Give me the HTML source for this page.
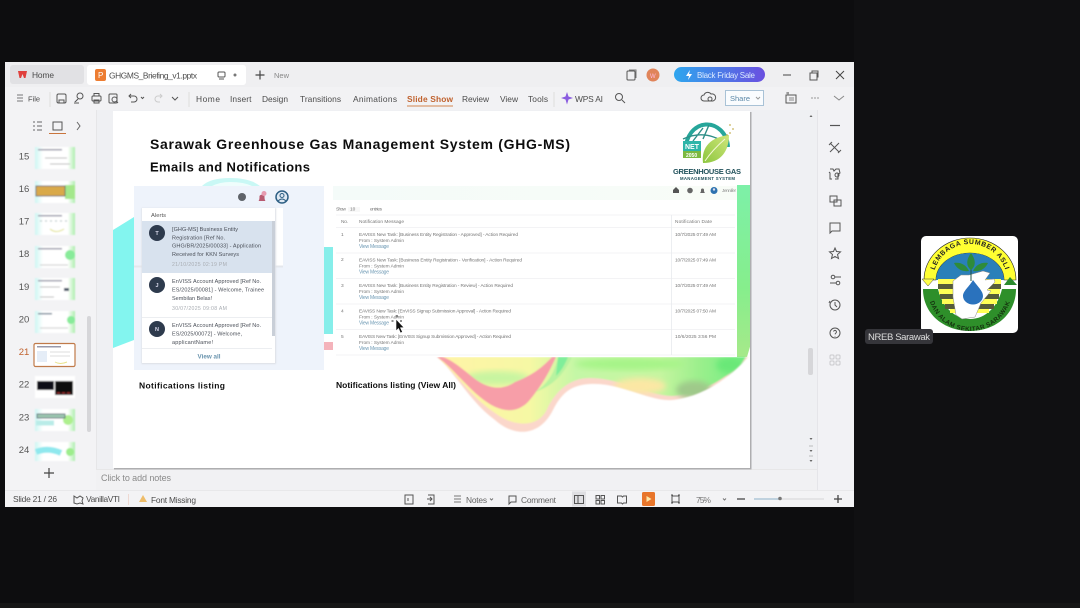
<!DOCTYPE html>
<html><head><meta charset="utf-8"><style>
html,body{margin:0;padding:0;background:#0d0d0f;width:1080px;height:608px;overflow:hidden}
svg{display:block}
text{font-family:"Liberation Sans",sans-serif}
.ui{font-size:8.400px;fill:#4c4c4c}
.ic{fill:none;stroke:#555;stroke-width:1}
.t{font-size:4.800px;fill:#777}
.a{font-size:5.500px;fill:#4a4f58}
.d{font-size:5.200px;fill:#a9adb3}
.n{font-size:9.500px;fill:#666}
.h{font-weight:bold;fill:#111}
</style></head><body>
<svg width="1080" height="608" viewBox="0 0 1080 608" xmlns="http://www.w3.org/2000/svg">
<defs>
<linearGradient id="pill" x1="0" x2="1" y1="0" y2="0"><stop offset="0" stop-color="#2ea6ee"/><stop offset="1" stop-color="#6a4fe0"/></linearGradient>
<linearGradient id="rg" x1="0" x2="0" y1="0" y2="1"><stop offset="0" stop-color="#7df0a8"/><stop offset=".6" stop-color="#86ee8c"/><stop offset="1" stop-color="#a6e98a"/></linearGradient>
<linearGradient id="wave" x1="0" x2="1" y1="0" y2="0"><stop offset="0" stop-color="#fff3a6"/><stop offset=".3" stop-color="#f6f8a4"/><stop offset=".45" stop-color="#c4f7a6"/><stop offset=".72" stop-color="#c6f5a0"/><stop offset=".85" stop-color="#9bef8c"/><stop offset="1" stop-color="#70ee82"/></linearGradient>
<linearGradient id="top" x1="0" x2="1" y1="0" y2="0"><stop offset="0" stop-color="#f4fbf9"/><stop offset="1" stop-color="#f8fcf7"/></linearGradient>
<linearGradient id="th" x1="0" x2="1" y1="0" y2="0"><stop offset="0" stop-color="#cdf6f3"/><stop offset=".2" stop-color="#fff"/><stop offset=".82" stop-color="#fff"/><stop offset="1" stop-color="#aeeeae"/></linearGradient>
<linearGradient id="leaf" x1="0" x2="1" y1="1" y2="0"><stop offset="0" stop-color="#8cc63f"/><stop offset="1" stop-color="#cfe67a"/></linearGradient>
<filter id="b" x="-5%" y="-5%" width="110%" height="110%"><feGaussianBlur stdDeviation="0.35"/></filter>
<filter id="b2" x="-5%" y="-5%" width="110%" height="110%"><feGaussianBlur stdDeviation="0.8"/></filter>
<filter id="b3" x="-20%" y="-20%" width="140%" height="140%"><feGaussianBlur stdDeviation="3"/></filter>
<clipPath id="slide"><rect x="113" y="111" width="637" height="357"/></clipPath>
<clipPath id="wclip"><path d="M437 357C455 372 470 402 495 420C515 438 540 436 553 410C562 392 572 385 590 384C620 382 650 402 672 400C702 397 730 378 748 357Z"/></clipPath>
<path id="arcTop" d="M933 281 A37 37 0 0 1 1007 281"/>
<path id="arcBot" d="M928 289 A42 42 0 0 0 1012 289"/>
</defs>

<rect width="1080" height="608" fill="#0d0d0f"/>
<rect x="854" y="0" width="226" height="608" fill="#101012"/>
<rect y="603" width="1080" height="5" fill="#161616"/>

<!-- window -->
<rect x="5" y="62" width="849" height="445" fill="#f2f2f4"/>
<rect x="5" y="62" width="849" height="25" fill="#efeff1"/>
<rect x="10" y="65" width="74" height="19" rx="3" fill="#e1e1e4"/>
<rect x="87" y="65" width="159" height="20" rx="3" fill="#fff"/>
<g filter="url(#b)">
<path d="M18 71h9l-1.500 7h-1.500l-1.500-4-1.500 4h-1.500z" fill="#e0403c"/>
<text x="32" y="78" class="ui" textLength="22" fill="#555">Home</text>
<rect x="95" y="69" width="11" height="12" rx="2" fill="#ed7d31"/>
<text x="98" y="78" font-size="8" fill="#fff">P</text>
<text x="109" y="78.500" class="ui" textLength="88">GHGMS_Briefing_v1.pptx</text>
<rect x="218" y="72" width="7" height="5" rx="1" class="ic"/><path d="M219 79h5" class="ic"/>
<circle cx="235" cy="75" r="1.500" fill="#777"/>
<path d="M260 70.500v9M255.500 75h9" stroke="#444" stroke-width="1.200"/>
<text x="274" y="78" font-size="7.500" fill="#888" textLength="15">New</text>
<rect x="627" y="71" width="8" height="9" rx="1" class="ic" stroke="#444"/><path d="M629 70h7v8" fill="none" stroke="#777"/>
<circle cx="653" cy="75" r="6.500" fill="#e0845a"/><text x="650" y="78" font-size="6" fill="#fbd">W</text>
<rect x="674" y="67" width="91" height="15" rx="7.500" fill="url(#pill)"/>
<path d="M690 70l-4 6h3l-1 4 4-6h-3z" fill="#fff"/>
<text x="697" y="78" font-size="8" fill="#dceaff" textLength="58">Black Friday Sale</text>
<path d="M783 75h8" stroke="#444" stroke-width="1"/>
<rect x="810" y="73" width="7" height="7" class="ic"/><path d="M812 73v-2h6v6h-1" class="ic"/>
<path d="M836 71l8 8M844 71l-8 8" stroke="#444" stroke-width="1"/>

<!-- toolbar -->
<path d="M17 95h6M17 98h6M17 101h6" stroke="#777"/>
<text x="28" y="101.500" class="ui" style="font-size:7.500px" textLength="12">File</text>
<path d="M50 92v15" stroke="#ddd"/>
<rect x="57" y="94" width="9" height="9" rx="1.500" class="ic"/><path d="M59 103v-3h5v3" class="ic"/>
<circle cx="80" cy="96" r="3" class="ic"/><path d="M78 99l-3 3v2M76 103h3" class="ic"/>
<rect x="92" y="96" width="9" height="5" rx="1" class="ic"/><rect x="94" y="93.500" width="5" height="2.500" class="ic"/><rect x="94" y="100" width="5" height="3" class="ic"/>
<rect x="109" y="94" width="8" height="9" rx="1" class="ic"/><circle cx="114.500" cy="99.500" r="2.500" class="ic"/><path d="M116 101l2 2" class="ic"/>
<path d="M129 96h5a3 3 0 0 1 0 6h-3M131 94l-2 2 2 2" class="ic"/><path d="M141 97l1.500 1.500L144 97" class="ic"/>
<path d="M162 96h-4a3 3 0 0 0 0 6h2M160 94l2 2-2 2" fill="none" stroke="#ccc"/>
<path d="M172 97l3 3 3-3" class="ic"/>
<path d="M189 92v15" stroke="#ddd"/>
<text x="196" y="102" class="ui" textLength="24">Home</text>
<text x="230" y="102" class="ui" textLength="21.500">Insert</text>
<text x="262" y="102" class="ui" textLength="26">Design</text>
<text x="300" y="102" class="ui" textLength="41">Transitions</text>
<text x="353" y="102" class="ui" textLength="44">Animations</text>
<text x="407" y="102" class="ui" font-weight="bold" style="fill:#c0622e" textLength="46">Slide Show</text>
<rect x="407" y="105.500" width="46" height="1" fill="#d2854f"/>
<text x="462" y="102" class="ui" textLength="27">Review</text>
<text x="500" y="102" class="ui" textLength="18">View</text>
<text x="528" y="102" class="ui" textLength="20">Tools</text>
<path d="M554 92v15" stroke="#ddd"/>
<path d="M567 92l1.500 4.500 4.500 1.500-4.500 1.500-1.500 5-1.500-5-4.500-1.500 4.500-1.500z" fill="#8a5ce0"/>
<text x="575" y="102" class="ui" textLength="28">WPS AI</text>
<circle cx="619" cy="97" r="3.500" class="ic"/><path d="M622 100l3 3" class="ic"/>
<path d="M704 101a3 3 0 0 1 0-6 4 4 0 0 1 7-1 3.500 3.500 0 0 1 2 7z" class="ic"/><circle cx="710" cy="99" r="2" fill="#f2f2f4" stroke="#555"/>
<rect x="725.500" y="90.500" width="38" height="15" fill="#fafcfe" stroke="#a9c2d6"/>
<text x="730" y="101" font-size="7.500" fill="#5b88a8" textLength="20">Share</text>
<path d="M756 97l2 2 2-2" fill="none" stroke="#999"/>
<rect x="786" y="95" width="10" height="8" class="ic"/><path d="M786 93h3M788 92v3M789 98h5M789 100h5" stroke="#666" stroke-width=".8"/>
<circle cx="812" cy="98" r=".6" fill="#555"/><circle cx="815" cy="98" r=".6" fill="#555"/><circle cx="818" cy="98" r=".6" fill="#555"/>
<path d="M834 96l5 4 5-4" fill="none" stroke="#888"/>
</g>

<!-- panels -->
<rect x="5" y="110" width="91" height="380" fill="#f3f3f5"/>
<rect x="96" y="110" width="722" height="359" fill="#eff0f3"/>
<rect x="96" y="110" width=".8" height="380" fill="#e3e3e6"/>
<rect x="817" y="110" width="37" height="380" fill="#f2f2f5"/>
<rect x="817" y="110" width=".8" height="380" fill="#e2e2e6"/>
<rect x="96" y="469" width="721" height="21" fill="#f1f1f3"/>
<rect x="96" y="469" width="721" height=".8" fill="#e4e4e6"/>
<rect x="5" y="490" width="849" height="17" fill="#f3f3f5"/>
<rect x="5" y="490" width="849" height=".8" fill="#e6e6e8"/>

<!-- left pane -->
<g filter="url(#b)">
<path d="M33 122h2M33 126h2M33 130h2M37 122h5M37 126h5M37 130h5" stroke="#666" stroke-width="1"/>
<rect x="53" y="122" width="9" height="8" fill="none" stroke="#555"/>
<rect x="49" y="133" width="17" height="1" fill="#c9743c"/>
<path d="M77 122l3 4-3 4" fill="none" stroke="#666"/>
<g font-size="9.500" fill="#555" text-anchor="middle">
<text x="24" y="159.500">15</text><text x="24" y="192">16</text><text x="24" y="224.500">17</text><text x="24" y="257">18</text><text x="24" y="290">19</text><text x="24" y="322.500">20</text><text x="24" y="355" fill="#c0622e">21</text><text x="24" y="387.500">22</text><text x="24" y="420.500">23</text><text x="24" y="453">24</text>
</g>
</g>
<g filter="url(#b2)">
<rect x="35" y="147" width="40" height="22" fill="url(#th)"/><rect x="38" y="149" width="24" height="1.500" fill="#99a"/><path d="M45 158h22M50 164h20" stroke="#bbb"/>
<rect x="35" y="181" width="40" height="22" fill="url(#th)"/><path d="M65 185l10 0v14h-10z" fill="#a4e88c"/><rect x="36" y="186" width="29" height="10" fill="#d9a94a" stroke="#556" stroke-width=".8"/>
<rect x="35" y="213" width="40" height="22" fill="url(#th)"/><rect x="38" y="215" width="24" height="1.500" fill="#99a"/><path d="M40 221h28" stroke="#abb" stroke-dasharray="2 3"/><path d="M50 229q6 5 14 0" stroke="#dfe07a" fill="none"/>
<rect x="35" y="246" width="40" height="22" fill="url(#th)"/><rect x="38" y="248" width="24" height="1.500" fill="#99a"/><circle cx="70" cy="255" r="5" fill="#88eb9a"/><path d="M40 265h28" stroke="#ccc"/>
<rect x="35" y="278" width="40" height="22" fill="url(#th)"/><rect x="38" y="280" width="24" height="1.500" fill="#99a"/><rect x="64" y="288" width="5" height="3" fill="#456"/><path d="M40 287h20M40 297h14" stroke="#bbb"/>
<rect x="35" y="311" width="40" height="22" fill="url(#th)"/><rect x="38" y="313" width="14" height="1.500" fill="#789"/><circle cx="71" cy="320" r="4" fill="#88eb9a"/><path d="M40 328h28" stroke="#ccc"/>
<rect x="35" y="376" width="40" height="22" fill="#fff"/><rect x="37" y="381" width="17" height="9" fill="#0a1015"/><rect x="55" y="381" width="18" height="14" fill="#0a0a0a"/><path d="M57 393h3M62 393h3M67 393h3" stroke="#a33"/>
<rect x="35" y="409" width="40" height="22" fill="url(#th)"/><path d="M36 423h18" stroke="#b9ece8" stroke-width="5"/><circle cx="68" cy="420" r="5" fill="#aef08e"/><rect x="37" y="414" width="28" height="4" fill="#9dc7b0" stroke="#456" stroke-width=".8"/>
<rect x="35" y="442" width="40" height="19" fill="url(#th)"/><path d="M36 452q12-5 25 1" stroke="#8fe8ee" stroke-width="6" fill="none"/><circle cx="70" cy="452" r="4" fill="#9ded8c"/>
</g>
<g filter="url(#b)"><rect x="34" y="343.500" width="41" height="23" rx="1.500" fill="#fff" stroke="#c07a48" stroke-width="1.200"/><rect x="37" y="346" width="24" height="1.500" fill="#99a"/><rect x="37" y="351" width="10" height="11" fill="#e5edf7"/><path d="M50 352h20M50 356h20" stroke="#ddd"/><path d="M55 362q5 3 12 0" stroke="#e9e38a" fill="none"/></g>
<rect x="87" y="316" width="4" height="116" rx="2" fill="#d6d6d9"/>
<path d="M49 468v10M44 473h10" stroke="#444" stroke-width="1.200"/>

<!-- slide -->
<rect x="114" y="112" width="637.500" height="357.500" fill="#aeaeb0"/>
<rect x="113" y="111" width="637" height="357" fill="#fff"/>
<g clip-path="url(#slide)">
<path d="M113 230L134 217V340L113 348Z" fill="#83f5ef"/>
<path d="M202 186q8-8 28-8q20 0 30 8z" fill="#c9f8f5"/>
<path d="M212 186q8-4 18-4q14 0 22 4z" fill="#fff" opacity=".7"/>
<rect x="324" y="247" width="9" height="87" fill="#86eeea"/>
<rect x="324" y="342" width="9" height="8" fill="#f4b3bb"/>
<path d="M737 185L752 185V340L747 357H737Z" fill="url(#rg)"/>
<g filter="url(#b2)">
<path d="M437 357C455 372 470 402 495 420C515 438 540 436 553 410C562 392 572 385 590 384C620 382 650 402 672 400C702 397 730 378 748 357Z" fill="#fbd7cb"/>
<path d="M437 357C455 372 472 398 495 413C515 428 540 428 548 407C558 388 572 378 590 378C620 378 650 396 672 396C700 394 730 378 746 357Z" fill="url(#wave)"/>
<g clip-path="url(#wclip)">
<ellipse cx="497" cy="378" rx="32" ry="7" fill="#c8f5a0" filter="url(#b3)"/>
<ellipse cx="640" cy="386" rx="26" ry="8" fill="#fbe7a4" filter="url(#b3)"/>
<ellipse cx="694" cy="390" rx="18" ry="9" fill="#9fc98a" filter="url(#b3)"/>
<ellipse cx="630" cy="364" rx="55" ry="6" fill="#a6f488" filter="url(#b3)"/>
<ellipse cx="730" cy="365" rx="14" ry="8" fill="#6be878" filter="url(#b3)"/>
</g>
<path d="M437 357C450 365 465 385 480 397C498 412 515 415 528 402C540 388 548 375 556 357L552 357C540 370 530 376 515 382C500 392 485 388 470 375C458 365 448 358 442 357Z" fill="#f79ea8"/>
<path d="M535 392C548 384 555 372 558 357H572C565 372 555 385 535 392Z" fill="#b8f3a0"/>
<path d="M558 357L568 357C565 364 562 370 556 376Z" fill="#7fee9a"/>
</g>

<!-- left image -->
<rect x="134" y="186" width="190" height="184" fill="#eef3fb"/>
<rect x="142" y="208" width="141" height="59" fill="#fff"/>
<rect x="134" y="265.500" width="8" height="2" fill="#e4e7ec"/>
<rect x="275" y="265.500" width="8" height="2" fill="#e4e7ec"/>
<rect x="141.500" y="208" width="134.500" height="156" fill="#dcdfe5" filter="url(#b2)"/>
<rect x="142" y="208" width="133" height="155" fill="#fff"/>
<rect x="142" y="221" width="130" height="52" fill="#d8e2ee"/>
<rect x="272" y="221" width="3" height="115" fill="#c9cfd8"/>
<path d="M142 317.500h130M142 348.500h130" stroke="#eceef1"/>
<g filter="url(#b)">
<circle cx="242" cy="197" r="4" fill="#5e6369"/>
<path d="M258.500 201c1-1 1-3 1-5a3 3 0 0 1 5 0c0 2 0 4 1 5z" fill="#b85a70"/><circle cx="264" cy="193.500" r="2.500" fill="#e79bb0"/>
<circle cx="282" cy="197" r="6" fill="#dfe9f3" stroke="#2d5f84" stroke-width="1.500"/><circle cx="282" cy="195.500" r="2" fill="none" stroke="#2d5f84"/><path d="M278 201q4-4 8 0" fill="none" stroke="#2d5f84"/>
<text x="151" y="217" font-size="5.800" fill="#555" textLength="15">Alerts</text>
<circle cx="157" cy="233" r="8" fill="#2d3a4e"/><circle cx="157" cy="285" r="8" fill="#2d3a4e"/><circle cx="157" cy="329" r="8" fill="#2d3a4e"/>
<text x="157" y="235" font-size="5.500" font-weight="bold" fill="#dde" text-anchor="middle">T</text>
<text x="157" y="287" font-size="5.500" font-weight="bold" fill="#dde" text-anchor="middle">J</text>
<text x="157" y="331" font-size="5.500" font-weight="bold" fill="#dde" text-anchor="middle">N</text>
<text x="172" y="231" class="a" textLength="66">[GHG-MS] Business Entity</text>
<text x="172" y="239.500" class="a" textLength="53">Registration [Ref No.</text>
<text x="172" y="247.500" class="a" textLength="89">GHG/BR/2025/00033] - Application</text>
<text x="172" y="256" class="a" textLength="67">Received for KKN Surveys</text>
<text x="172" y="266" class="d" textLength="55">21/10/2025 02:19 PM</text>
<text x="172" y="283" class="a" textLength="89">EnVISS Account Approved [Ref No.</text>
<text x="172" y="291.500" class="a" textLength="92">ES/2025/00081] - Welcome, Trainee</text>
<text x="172" y="300" class="a" textLength="40">Sembilan Belas!</text>
<text x="172" y="310" class="d" textLength="55">30/07/2025 09:08 AM</text>
<text x="172" y="327" class="a" textLength="89">EnVISS Account Approved [Ref No.</text>
<text x="172" y="335.500" class="a" textLength="70">ES/2025/00072] - Welcome,</text>
<text x="172" y="344" class="a" textLength="41">applicantName!</text>
<text x="209" y="358.500" font-size="6.300" font-weight="bold" fill="#6a94ae" text-anchor="middle">View all</text>
</g>

<!-- right image -->
<rect x="333" y="186" width="404" height="171" fill="#fff"/>
<rect x="333" y="186" width="404" height="14" fill="url(#top)"/>
<g filter="url(#b)">
<path d="M673 190l3-3 3 3v3h-6z" fill="#555"/><circle cx="690" cy="190.500" r="2.800" fill="#666"/><path d="M700 193c1-1 1-2 1-3a1.500 1.500 0 0 1 3 0c0 1 0 2 1 3z" fill="#666"/>
<circle cx="714" cy="190.500" r="3.500" fill="#2e72b0"/><circle cx="714" cy="189.500" r="1.200" fill="#dde"/>
<text x="722" y="192" font-size="4.500" fill="#888" textLength="14">Jennifer</text>
<text x="336" y="210.500" class="t" textLength="10" fill="#999">Show</text><rect x="348" y="207" width="12" height="5" fill="#f8f8f8"/><text x="350" y="210.500" class="t">10</text>
<text x="370" y="210.500" class="t" textLength="12">entries</text>
<path d="M336 215h399M336 227.500h399M336 253h399M336 278.500h399M336 304h399M336 329.500h399M336 355h399" stroke="#eff0f2" stroke-width=".8"/>
<path d="M671.500 215v140" stroke="#e8eaee" stroke-width=".8"/>
<text x="341" y="223" class="t" textLength="7" fill="#555">No.</text>
<text x="359" y="223" class="t" textLength="45" fill="#555">Notification Message</text>
<text x="675" y="223" class="t" textLength="37" fill="#555">Notification Date</text>
<g class="t" fill="#7d7d7d">
<text x="341" y="236">1</text><text x="341" y="261">2</text><text x="341" y="287">3</text><text x="341" y="312.500">4</text><text x="341" y="338">5</text>
<text x="359" y="236" textLength="159">EAVISS New Task: [Business Entity Registration - Approved] - Action Required</text>
<text x="359" y="261.500" textLength="163">EAVISS New Task: [Business Entity Registration - Verification] - Action Required</text>
<text x="359" y="287" textLength="154">EAVISS New Task: [Business Entity Registration - Review] - Action Required</text>
<text x="359" y="312.500" textLength="152">EAVISS New Task: [EnVISS Signup Submission Approval] - Action Required</text>
<text x="359" y="338" textLength="152">EAVISS New Task: [EnVISS Signup Submission Approved] - Action Required</text>
<text x="359" y="242" textLength="45">From : System Admin</text>
<text x="359" y="267.500" textLength="45">From : System Admin</text>
<text x="359" y="293" textLength="45">From : System Admin</text>
<text x="359" y="318.500" textLength="45">From : System Admin</text>
<text x="359" y="344" textLength="45">From : System Admin</text>
<text x="675" y="236" textLength="41">10/7/2025 07:49 AM</text>
<text x="675" y="261.500" textLength="41">10/7/2025 07:49 AM</text>
<text x="675" y="287" textLength="41">10/7/2025 07:49 AM</text>
<text x="675" y="312.500" textLength="41">10/7/2025 07:50 AM</text>
<text x="675" y="338" textLength="41">10/6/2025 3:56 PM</text>
</g>
<g font-size="5" fill="#6f9ab5">
<text x="359" y="248" textLength="30">View Message</text>
<text x="359" y="273.500" textLength="30">View Message</text>
<text x="359" y="299" textLength="30">View Message</text>
<text x="359" y="324.500" textLength="30">View Message</text>
<text x="359" y="350" textLength="30">View Message</text>
</g>
</g>

<!-- titles -->
<g filter="url(#b)">
<text x="150" y="149" class="h" font-size="14" textLength="420">Sarawak Greenhouse Gas Management System (GHG-MS)</text>
<text x="150" y="171.500" class="h" font-size="13" textLength="160">Emails and Notifications</text>
<text x="139" y="388.500" class="h" font-size="8.500" textLength="86">Notifications listing</text>
<text x="336" y="388" class="h" font-size="8.500" textLength="120">Notifications listing (View All)</text>
</g>

<!-- logo -->
<g filter="url(#b)">
<path d="M686 150a21 24 0 0 1 42-3" fill="none" stroke="#26a69a" stroke-width="4"/>
<path d="M693 141l10-13M703 139l6-14M683 139q22-10 42 4" fill="none" stroke="#2f8f88" stroke-width="1.400"/>
<path d="M703 163c-2-16 8-26 26-28c0 16-8 28-26 28z" fill="url(#leaf)"/>
<path d="M705 161c6-9 12-15 20-22" stroke="#f4f8d8" fill="none"/>
<rect x="683" y="141" width="18" height="10" fill="#2fb5a9"/><rect x="683" y="151" width="18" height="7" fill="#7bb93f"/>
<text x="685" y="149" font-size="7" fill="#fff" font-weight="bold">NET</text>
<text x="686" y="157" font-size="5" fill="#fff" font-weight="bold">2050</text>
<circle cx="730" cy="133" r=".9" fill="#c6b25a"/><circle cx="733" cy="129" r=".9" fill="#c6b25a"/><circle cx="730" cy="125" r=".9" fill="#c6b25a"/><circle cx="727" cy="135" r=".9" fill="#c6b25a"/>
<text x="673" y="174" font-size="7.500" font-weight="bold" fill="#24525c" textLength="68">GREENHOUSE GAS</text>
<text x="680" y="180" font-size="4.300" font-weight="bold" fill="#24525c" textLength="55">MANAGEMENT SYSTEM</text>
</g>
</g>

<!-- cursor -->
<path d="M396 319v12l2.500-2.500 2 4.500 2-1-2-4.200 3.500-.3z" fill="#111" stroke="#fff" stroke-width=".6"/>
<path d="M391.500 321h2M397 317.500v-2.500M400 321h2" stroke="#222" stroke-width="1"/>

<!-- scroll & notes -->
<rect x="808" y="348" width="5" height="27" rx="2" fill="#d6d6d9"/>
<path d="M809.500 117l1.500-2 1.500 2z" fill="#666"/>
<g fill="#666"><path d="M809.500 438h3l-1.500 2z"/><path d="M809.500 450h3l-1.500 2z"/><path d="M809.500 460h3l-1.500 2z"/></g>
<path d="M809 446h4M809 456h4" stroke="#aaa" stroke-width=".8"/>
<text x="101" y="481" class="n" filter="url(#b)" font-size="9" textLength="70" style="fill:#8a8a8a;font-size:9px">Click to add notes</text>

<!-- right icons -->
<g class="ic" filter="url(#b)">
<path d="M830 125.500h10" stroke-width="1.200"/>
<path d="M830 143l9 9M839 143l-9 9M829 145l3-3M838 153l3-3"/>
<path d="M830 169h3l1 2 2-2h3l1 4-2 1v5h-3M832 179h-2v-6l-1-1"/><circle cx="837" cy="175" r="2"/>
<rect x="830" y="196" width="7" height="6"/><rect x="834" y="200" width="7" height="6"/>
<path d="M830 223h10v8h-8l-2 2z"/>
<path d="M835 248l1.500 3.500 4 .4-3 2.600 1 4-3.500-2-3.500 2 1-4-3-2.600 4-.4z"/>
<circle cx="833" cy="277" r="1.800"/><path d="M835 277h6M830 283h6"/><circle cx="838" cy="283" r="1.800"/>
<circle cx="835" cy="305" r="5"/><path d="M835 302v3l2 2M830 301l-1 2"/>
<circle cx="835" cy="333" r="5"/><path d="M833.500 331.500a1.500 1.500 0 1 1 2 1.800l-.5 1M835 336v.5"/>
<g stroke="#c9c9cd"><rect x="830" y="355" width="4" height="4" rx="1"/><rect x="836" y="355" width="4" height="4" rx="1"/><rect x="830" y="361" width="4" height="4" rx="1"/><rect x="836" y="361" width="4" height="4" rx="1"/></g>
</g>

<!-- status bar -->
<g filter="url(#b)">
<text x="13" y="502" class="ui" textLength="44">Slide 21 / 26</text>
<path d="M74 496l3 2 3-2 3 2-1 3 1 3-3-1-3 1-3-1z" class="ic"/>
<text x="86" y="502" class="ui" textLength="34">VanillaVTI</text>
<path d="M128.500 494v11" stroke="#eed9d2"/>
<path d="M143 495l4 7h-8z" fill="#eebd6a"/>
<text x="151" y="503" class="ui" textLength="45">Font Missing</text>
<rect x="405" y="495" width="8" height="9" class="ic"/><path d="M408 498v3" class="ic"/>
<path d="M428 495h6v9h-6M427 499h5M430 497l2 2-2 2" class="ic"/>
<path d="M454 496h7M454 499h7M454 502h7" stroke="#777"/>
<text x="466" y="503" class="ui" textLength="21" style="fill:#666">Notes</text>
<path d="M490 498.500l1.500 1.500 1.500-1.500" fill="none" stroke="#777"/>
<path d="M509 496h7v6h-5l-2 2z" class="ic"/>
<text x="521" y="503" class="ui" textLength="35" style="fill:#666">Comment</text>
<rect x="572" y="491.500" width="14" height="15" fill="#dfdfe2"/>
<rect x="574.500" y="495.500" width="9" height="8" class="ic"/><path d="M578 495.500v8" class="ic"/>
<rect x="596" y="495.500" width="3.500" height="3.500" class="ic"/><rect x="601" y="495.500" width="3.500" height="3.500" class="ic"/><rect x="596" y="500.500" width="3.500" height="3.500" class="ic"/><rect x="601" y="500.500" width="3.500" height="3.500" class="ic"/>
<path d="M617.500 496h4l1 1 1-1h3v7h-3l-1 1-1-1h-4z" class="ic"/>
<rect x="642" y="492" width="13" height="14" rx="1.500" fill="#e8742a"/><path d="M646.500 496v6l5-3z" fill="#fde8a8"/>
<rect x="672" y="496" width="7" height="6" class="ic"/><path d="M671 495h2M678 495h2M671 503h2M678 503h2" class="ic"/>
<text x="696" y="503" class="ui" textLength="15" style="fill:#777">75%</text>
<path d="M723 498.500l1.500 1.500 1.500-1.500" fill="none" stroke="#777"/>
<path d="M737 499h8" stroke="#555" stroke-width="1.400"/>
<path d="M754 499h26" stroke="#8cb0c9"/><path d="M780 499h44" stroke="#d4d4d7"/><circle cx="780" cy="498.500" r="1.800" fill="#777"/>
<path d="M838 495v8M834 499h8" stroke="#444" stroke-width="1.300"/>
</g>

<!-- participant tile -->
<rect x="921" y="236" width="97" height="97" rx="5" fill="#fff"/>
<g filter="url(#b)">
<path d="M924 280A46 42 0 0 1 1016 280L1004 280A34 27 0 0 0 936 280Z" fill="#ffff33" stroke="#222" stroke-width=".6"/>
<path d="M936 280A34 27 0 0 1 1004 280Z" fill="#2a80b9"/>
<path d="M922 279h12l-6 7z" fill="#ffff4a" stroke="#444" stroke-width=".5"/>
<path d="M1004 285l6-8 7 8z" fill="#2c8a2f"/>
<path d="M923 289H938C942 306 954 319 970 319C986 319 998 306 1002 289H1016C1016 314 996 331 970 331C944 331 923 314 923 289Z" fill="#2f8f2c"/>
<path d="M938 279h63v5h-63z" fill="#ffff55"/>
<path d="M938 284h63v5h-63z" fill="#565b3a"/>
<path d="M939 289h61v5h-61z" fill="#ffff55"/>
<path d="M940 294h59v5h-59z" fill="#565b3a"/>
<path d="M942 299h55v5h-55z" fill="#ffff55"/>
<path d="M945 304h49v5h-49z" fill="#565b3a"/>
<path d="M950 309h39v4h-39z" fill="#ffff55"/>
<path d="M953 281l8-6 8 0 14-4 7 2-5 7 9-1 1 3-8 8 4 1-10 12-6 14-13 2-6-4-3-18z" fill="#fff" stroke="#888" stroke-width=".5"/>
<path d="M973 280c5 7 10 11 10 16a10 8.500 0 0 1-20 0c0-5 6-9 10-16z" fill="#2b72bd"/>
<path d="M971 281v-12" stroke="#254" stroke-width="1"/>
<path d="M971 270c-5-4-5-10 0-17c5 7 5 13 0 17z" fill="#2e8b3a"/>
<path d="M969 271c-7 1-12-2-15-8c7-1 12 2 15 8zM973 271c7 1 12-2 15-8c-7-1-12 2-15 8z" fill="#2e8b3a"/>
<text font-size="6.800" font-weight="bold" fill="#222" letter-spacing=".6" text-anchor="middle"><textPath href="#arcTop" startOffset="50%">LEMBAGA SUMBER ASLI</textPath></text>
<text font-size="6.300" font-weight="bold" fill="#14320f" letter-spacing=".4" text-anchor="middle"><textPath href="#arcBot" startOffset="50%">DAN ALAM SEKITAR SARAWAK</textPath></text>
</g>
<rect x="865" y="329" width="68" height="15" rx="3" fill="#35353a"/>
<text x="868" y="340" font-size="9.500" fill="#dcdcdc" textLength="62" filter="url(#b)">NREB Sarawak</text>
</svg>
</body></html>
